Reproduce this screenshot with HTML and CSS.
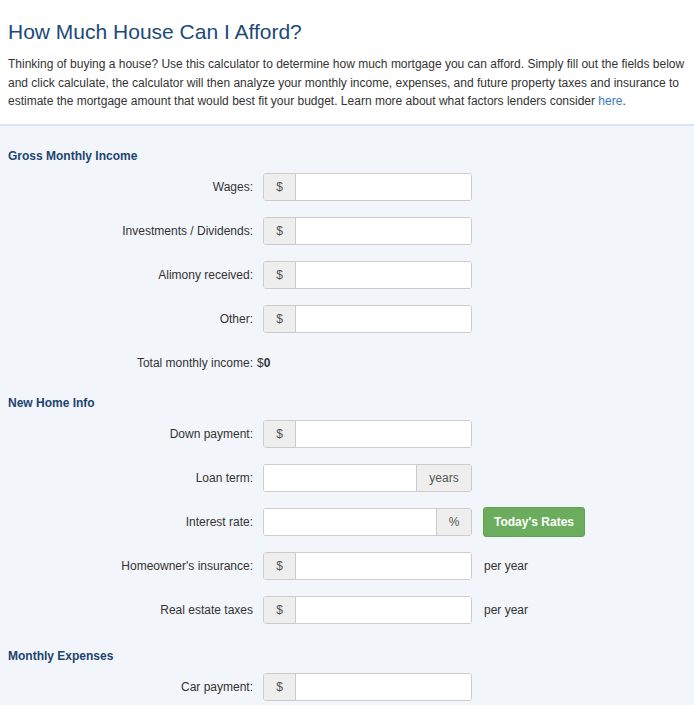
FILE: index.html
```html
<!DOCTYPE html>
<html>
<head>
<meta charset="utf-8">
<link rel="stylesheet" href="styles.css">
</head>
<body>
<div class="intro">
  <h1 class="title">How Much House Can I Afford?</h1>
  <p class="lead">Thinking of buying a house? Use this calculator to determine how much mortgage you can afford. Simply fill out the fields below and click calculate, the calculator will then analyze your monthly income, expenses, and future property taxes and insurance to estimate the mortgage amount that would best fit your budget. Learn more about what factors lenders consider <a class="link" href="#">here</a>.</p>
</div>
<div class="form">
  <h2 class="section">Gross Monthly Income</h2>
  <div class="row"><label class="lbl">Wages:</label><div class="group"><span class="addon pre">$</span><input class="field" type="text"></div></div>
  <div class="row"><label class="lbl">Investments / Dividends:</label><div class="group"><span class="addon pre">$</span><input class="field" type="text"></div></div>
  <div class="row"><label class="lbl">Alimony received:</label><div class="group"><span class="addon pre">$</span><input class="field" type="text"></div></div>
  <div class="row"><label class="lbl">Other:</label><div class="group"><span class="addon pre">$</span><input class="field" type="text"></div></div>
  <div class="row total"><span class="lbl">Total monthly income:</span><span class="value">$<b>0</b></span></div>

  <h2 class="section">New Home Info</h2>
  <div class="row"><label class="lbl">Down payment:</label><div class="group"><span class="addon pre">$</span><input class="field" type="text"></div></div>
  <div class="row"><label class="lbl">Loan term:</label><div class="group"><input class="field" type="text"><span class="addon post years">years</span></div></div>
  <div class="row"><label class="lbl">Interest rate:</label><div class="group"><input class="field" type="text"><span class="addon post pct">%</span></div><button class="btn">Today's Rates</button></div>
  <div class="row"><label class="lbl">Homeowner's insurance:</label><div class="group"><span class="addon pre">$</span><input class="field" type="text"></div><span class="suffix">per year</span></div>
  <div class="row"><label class="lbl">Real estate taxes</label><div class="group"><span class="addon pre">$</span><input class="field" type="text"></div><span class="suffix">per year</span></div>

  <h2 class="section expenses">Monthly Expenses</h2>
  <div class="row"><label class="lbl">Car payment:</label><div class="group"><span class="addon pre">$</span><input class="field" type="text"></div></div>
</div>
</body>
</html>
```
FILE: styles.css
```css
html, body {
  margin: 0;
  padding: 0;
  background: #f2f5fa;
  font-family: "Liberation Sans", Arial, sans-serif;
  color: #333;
}
.intro {
  background: #fff;
  padding: 19px 8px 13px 8px;
  border-bottom: 2px solid #d9e4f8;
}
.title {
  margin: 0 0 10px 0;
  font-size: 21px;
  font-weight: normal;
  color: #1d4a78;
  line-height: 26px;
}
.lead {
  margin: 0;
  font-size: 12px;
  line-height: 18.5px;
  color: #333;
}
.link {
  color: #3a78c2;
  text-decoration: none;
}
.form {
  padding: 22px 8px 20px 8px;
}
.section {
  margin: 0 0 9px 0;
  font-size: 12px;
  font-weight: bold;
  color: #1d4470;
  line-height: 16px;
}
.row {
  display: flex;
  align-items: center;
  height: 28px;
  margin-bottom: 16px;
  font-size: 12px;
}
.lbl {
  width: 245px;
  text-align: right;
  margin-right: 10px;
  color: #333;
}
.group {
  display: flex;
  width: 209px;
  height: 28px;
  box-sizing: border-box;
  border: 1px solid #ccc;
  border-radius: 3px;
  background: #fff;
  overflow: hidden;
}
.addon {
  display: flex;
  align-items: center;
  justify-content: center;
  background: #eee;
  color: #555;
  font-size: 12px;
}
.pre {
  width: 31px;
  border-right: 1px solid #ccc;
}
.post {
  border-left: 1px solid #ccc;
}
.years { width: 54px; }
.pct { width: 34px; }
.field {
  flex: 1;
  min-width: 0;
  border: none;
  outline: none;
  background: #fff;
  padding: 0 8px;
  font: inherit;
}
.total {
  margin-bottom: 18px;
}
.value {
  margin-left: -6px;
  color: #333;
}
.btn {
  margin-left: 11px;
  width: 102px;
  height: 30px;
  background: #6cad5d;
  border: 1px solid #62a254;
  border-radius: 3px;
  color: #fff;
  font-family: "Liberation Sans", Arial, sans-serif;
  font-weight: bold;
  font-size: 12px;
  padding: 0;
}
.suffix {
  margin-left: 12px;
  color: #333;
}
.expenses {
  margin-top: 24px;
}
```
